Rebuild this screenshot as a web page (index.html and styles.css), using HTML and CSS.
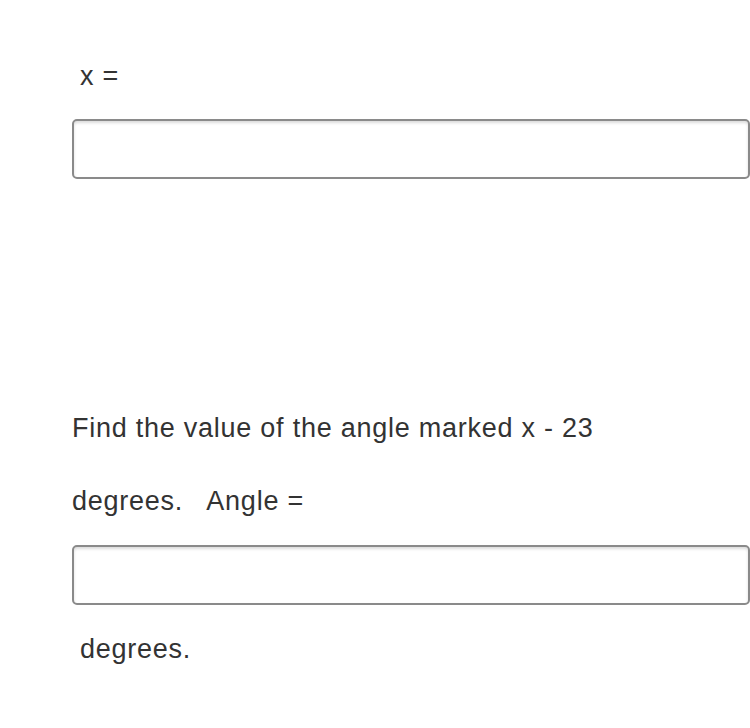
FILE: index.html
```html
<!DOCTYPE html>
<html>
<head>
<meta charset="utf-8">
<link rel="stylesheet" href="styles.css">
</head>
<body>
<main class="page">
  <p class="label indent first">x =</p>
  <input class="answer a1" type="text">
  <p class="label q">Find the value of the angle marked x - 23</p>
  <p class="label q2">degrees.&nbsp;&nbsp; Angle =</p>
  <input class="answer a2" type="text">
  <p class="label indent last">degrees.</p>
</main>
</body>
</html>
```

FILE: styles.css
```css
html, body {
  margin: 0;
  padding: 0;
  background: #ffffff;
}
.page {
  padding: 61px 0 0 72px;
  display: flex;
  flex-direction: column;
  align-items: flex-start;
  font-family: "Liberation Sans", Arial, sans-serif;
  color: #333333;
}
.label {
  margin: 0;
  font-size: 27px;
  line-height: 30px;
  letter-spacing: 0.75px;
}
.indent {
  padding-left: 8px;
}
.answer {
  box-sizing: border-box;
  width: 678px;
  height: 60px;
  margin: 0;
  border: 2px solid #8a8a8a;
  border-radius: 5px;
  background: #ffffff;
  box-shadow: inset 0 2px 3px rgba(0, 0, 0, 0.14);
  font-size: 24px;
  padding: 0 10px;
}
.a1 { margin-top: 28px; }
.q { margin-top: 234px; }
.q2 { margin-top: 43px; }
.a2 { margin-top: 29px; }
.last { margin-top: 29px; }
```
